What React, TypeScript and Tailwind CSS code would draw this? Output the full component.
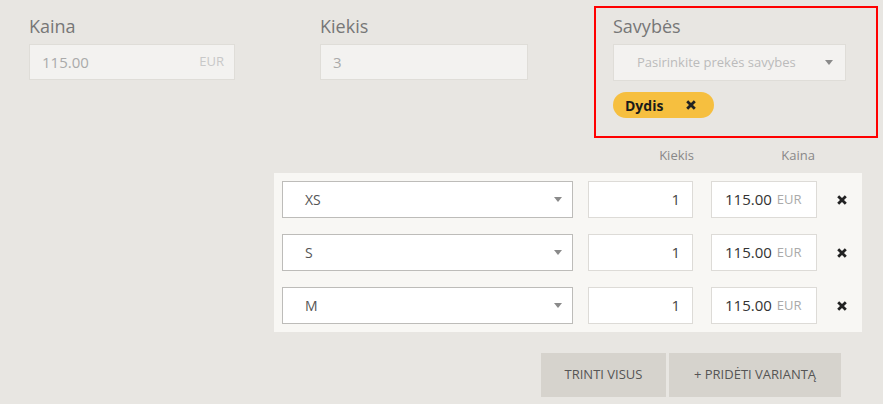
import { useState } from 'react';

const Caret = () => (
  <svg width="8" height="5" viewBox="0 0 8 5" className="shrink-0">
    <path d="M0 0h8L4 5z" fill="#8a8a8a" />
  </svg>
);

const Cross = ({ size = 10 }: { size?: number }) => (
  <svg width={size} height={size} viewBox="0 0 10 10">
    <path d="M1.2 1.2l7.6 7.6M8.8 1.2l-7.6 7.6" stroke="#222" strokeWidth="2.8" />
  </svg>
);

type Variant = { size: string; qty: number; price: string };

export default function App() {
  const [variants, setVariants] = useState<Variant[]>([
    { size: 'XS', qty: 1, price: '115.00' },
    { size: 'S', qty: 1, price: '115.00' },
    { size: 'M', qty: 1, price: '115.00' },
  ]);

  const removeVariant = (i: number) => setVariants(variants.filter((_, idx) => idx !== i));

  return (
    <div className="w-[883px] h-[404px] bg-[#e8e6e2] overflow-hidden font-['Open_Sans',sans-serif]">
      {/* Top fields */}
      <div className="flex items-start pt-[6px]">
        <div className="ml-[29px] pt-[8px] w-[206px]">
          <p className="text-[18px] leading-[24px] text-[#777]">Kaina</p>
          <div className="mt-[6px] h-[36px] flex items-center justify-between px-[12px] pr-[10px] bg-[#f3f2f0] border border-[#dfddd8]">
            <span className="text-[15px] text-[#aaa]">115.00</span>
            <span className="text-[13px] text-[#c8c8c8]">EUR</span>
          </div>
        </div>

        <div className="ml-[85px] pt-[8px] w-[208px]">
          <p className="text-[18px] leading-[24px] text-[#777]">Kiekis</p>
          <div className="mt-[6px] h-[36px] flex items-center px-[12px] bg-[#f3f2f0] border border-[#dfddd8]">
            <span className="text-[15px] text-[#aaa]">3</span>
          </div>
        </div>

        <div className="ml-[66px] w-[284px] border-2 border-[#ff0000] pt-[6px] pb-[18px] px-[17px]">
          <p className="text-[18px] leading-[24px] text-[#777]">Savybės</p>
          <div className="mt-[6px] w-[233px] h-[37px] flex items-center justify-between pl-[23px] pr-[12px] bg-[#f3f2f0] border border-[#dfddd8]">
            <span className="text-[13px] text-[#bbb]">Pasirinkite prekės savybes</span>
            <Caret />
          </div>
          <div className="mt-[11px] w-[101px] h-[26px] rounded-full bg-[#f6bf3f] flex items-center justify-between pl-[12px] pr-[18px]">
            <span className="text-[14px] font-bold text-[#1a1a1a]">Dydis</span>
            <Cross size={10} />
          </div>
        </div>
      </div>

      {/* Variants table */}
      <div className="ml-[274px] w-[588px]">
        <div className="h-[35px] flex items-center text-[13px] text-[#888]">
          <span className="w-[420px] text-right">Kiekis</span>
          <span className="w-[121px] text-right">Kaina</span>
        </div>

        <div className="bg-[#f8f7f4] px-[8px] py-[8px] flex flex-col gap-[16px]">
          {variants.map((v, i) => (
            <div key={i} className="flex items-center h-[37px]">
              <div className="w-[291px] h-[37px] bg-white border border-[#bdbcb9] flex items-center justify-between pl-[22px] pr-[10px]">
                <span className="text-[14px] text-[#555]">{v.size}</span>
                <Caret />
              </div>
              <div className="ml-[15px] w-[105px] h-[37px] bg-white border border-[#dddbd7] flex items-center justify-end pr-[12px]">
                <span className="text-[15px] text-[#444]">{v.qty}</span>
              </div>
              <div className="ml-[18px] w-[106px] h-[37px] bg-white border border-[#dddbd7] flex items-center pl-[13px] gap-[5px]">
                <span className="text-[15px] text-[#333]">{v.price}</span>
                <span className="text-[13px] text-[#aaa]">EUR</span>
              </div>
              <button onClick={() => removeVariant(i)} className="ml-[20px] flex items-center">
                <Cross size={10} />
              </button>
            </div>
          ))}
        </div>

        <div className="flex justify-end gap-[3px] mt-[21px] pr-[21px]">
          <button className="w-[125px] h-[44px] bg-[#d6d3cd] text-[13px] text-[#555]">TRINTI VISUS</button>
          <button className="w-[172px] h-[44px] bg-[#d6d3cd] text-[13px] text-[#555]">+ PRIDĖTI VARIANTĄ</button>
        </div>
      </div>
    </div>
  );
}
